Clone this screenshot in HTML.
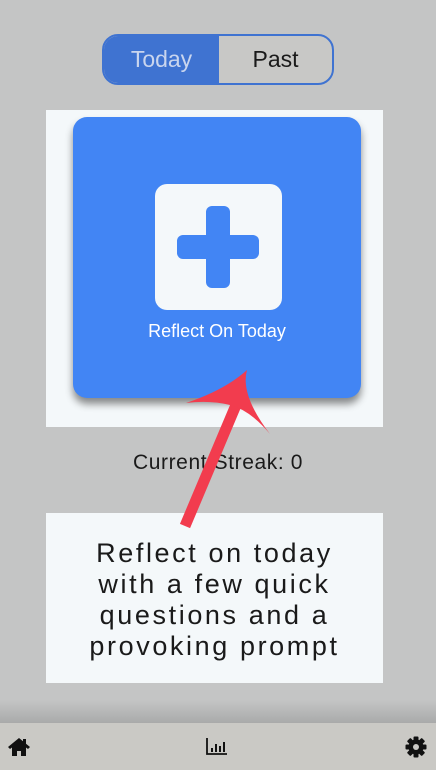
<!DOCTYPE html>
<html><head><style>
html,body{margin:0;padding:0}
body{width:436px;height:770px;background:#c4c5c5;position:relative;overflow:hidden;font-family:"Liberation Sans",sans-serif}
.seg{position:absolute;left:102px;top:34px;width:228px;height:47px;border:2px solid #3f73d1;border-radius:16px;overflow:hidden;background:#c8c8c6}
.seg .a{position:absolute;left:0;top:0;width:115px;height:47px;background:#3f73d1;color:#c9d5ee;font-size:23px;line-height:47px;text-align:center}
.seg .b{position:absolute;left:115px;top:0;width:113px;height:47px;color:#1a1a1a;font-size:23px;line-height:47px;text-align:center}
.panel{position:absolute;left:46px;top:110px;width:337px;height:317px;background:#f4f8fa}
.card{position:absolute;left:73px;top:117px;width:288px;height:281px;background:#4285f4;border-radius:14px;box-shadow:0 6px 8px rgba(0,0,0,.45)}
.plus{position:absolute;left:155px;top:184px;width:127px;height:126px;background:#f4f8fa;border-radius:12px}
.lbl{position:absolute;left:73px;top:321px;width:288px;text-align:center;color:#fff;font-size:18px}
.streak{position:absolute;left:0;width:436px;top:451px;text-align:center;font-size:21px;letter-spacing:.6px;color:#1a1a1a}
.box{position:absolute;left:46px;top:513px;width:337px;height:170px;background:#f4f8fa;text-align:center;font-size:27px;letter-spacing:2.6px;line-height:31px;color:#1a1a1a;padding-top:25px;box-sizing:border-box}
.shade{position:absolute;left:0;top:700px;width:436px;height:23px;background:linear-gradient(#c4c5c5,#a9aaaa)}
.bar{position:absolute;left:0;top:723px;width:436px;height:47px;background:#cac9c5}
</style></head><body>
<div class="seg"><div class="a">Today</div><div class="b">Past</div></div>
<div class="panel"></div>
<div class="card"></div>
<div class="plus"><svg width="127" height="126"><rect x="51" y="22" width="24" height="82" rx="6" fill="#4285f4"/><rect x="22" y="51" width="82" height="24" rx="6" fill="#4285f4"/></svg></div>
<div class="lbl">Reflect On Today</div>
<div class="streak">Current Streak: 0</div>
<div class="box">Reflect on today<br>with a few quick<br>questions and a<br>provoking prompt</div>
<svg style="position:absolute;left:0;top:0" width="436" height="770"><line x1="185" y1="526" x2="236" y2="405" stroke="#f23c4e" stroke-width="11"/><path d="M247 370 Q240 395 270 434 Q250 410 230 405 Q210 400 186 403 Q225 390 247 370Z" fill="#f23c4e"/></svg>
<div class="shade"></div>
<div class="bar">
<svg style="position:absolute;left:7px;top:14px" width="24" height="20" viewBox="0 0 24 20"><path d="M12 1L1 10l2 2 2-1.5V19h5v-5h4v5h5v-8.5l2 1.5 2-2-4-3.3V2h-3v2.2z" fill="#111"/></svg>
<svg style="position:absolute;left:206px;top:14px" width="22" height="20"><path d="M1 1v16h20" stroke="#111" stroke-width="1.8" fill="none"/><rect x="5" y="11" width="2" height="4" fill="#111"/><rect x="9" y="7" width="2" height="8" fill="#111"/><rect x="13" y="9" width="2" height="6" fill="#111"/><rect x="17" y="5" width="2" height="10" fill="#111"/></svg>
<svg style="position:absolute;left:405px;top:13px" width="22" height="22" viewBox="0 0 22 22"><g fill="#111" transform="translate(11 11)"><circle r="7.5"/><g id="t"><rect x="-2.5" y="-10.5" width="5" height="5" rx="1"/></g><use href="#t" transform="rotate(45)"/><use href="#t" transform="rotate(90)"/><use href="#t" transform="rotate(135)"/><use href="#t" transform="rotate(180)"/><use href="#t" transform="rotate(225)"/><use href="#t" transform="rotate(270)"/><use href="#t" transform="rotate(315)"/><circle r="3" fill="#cac9c5"/></g></svg>
</div>
</body></html>
